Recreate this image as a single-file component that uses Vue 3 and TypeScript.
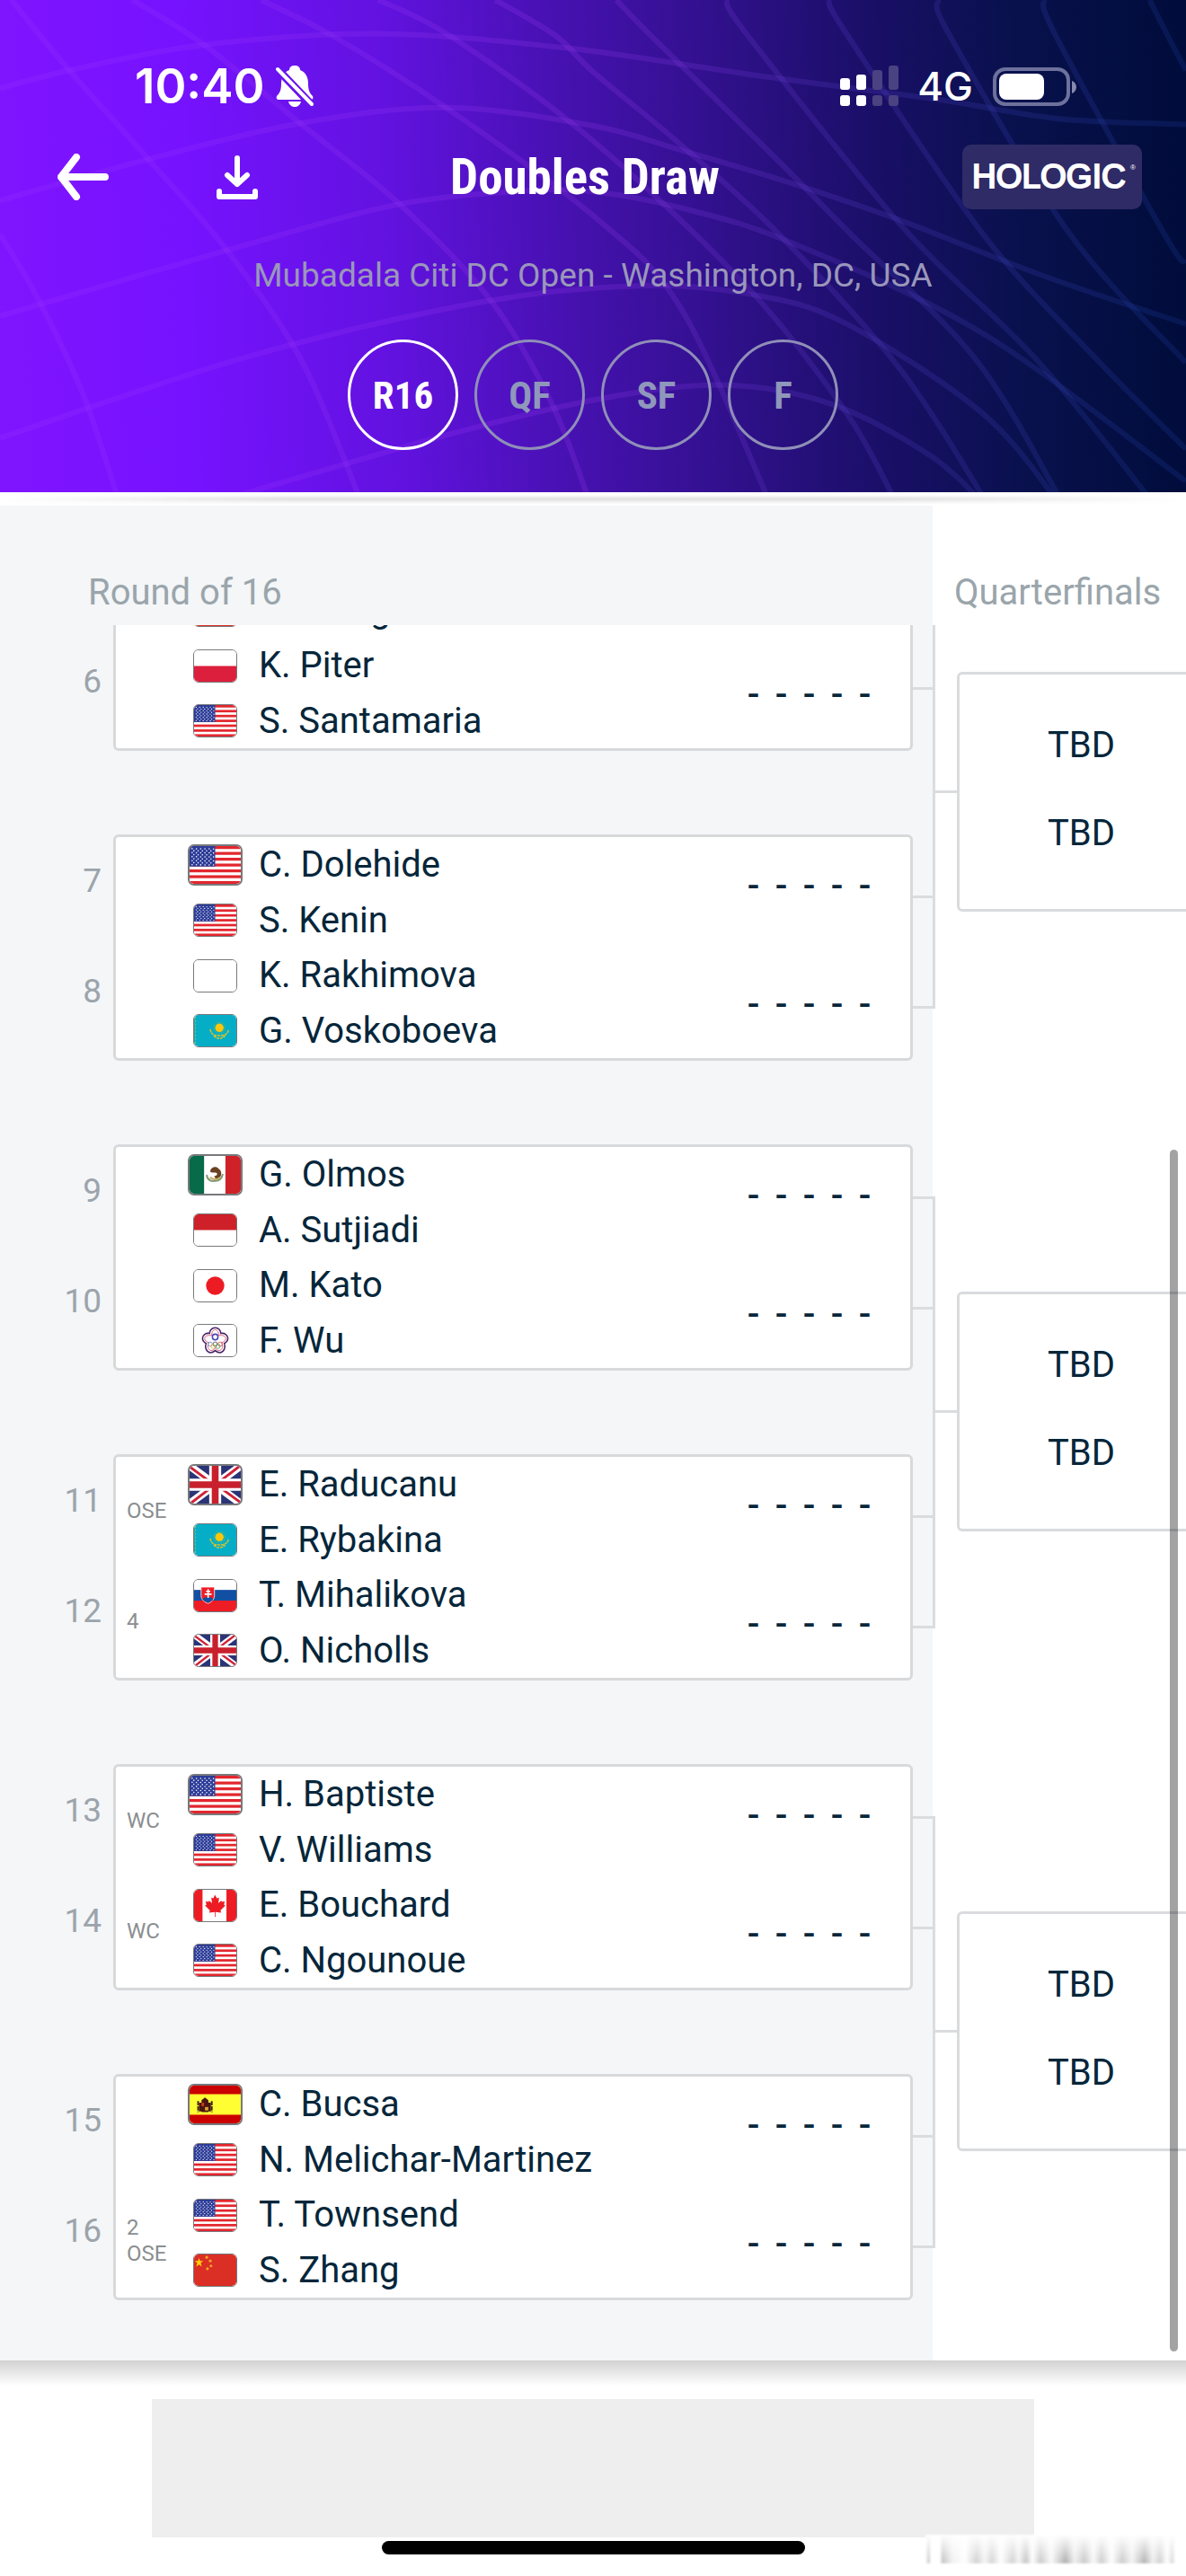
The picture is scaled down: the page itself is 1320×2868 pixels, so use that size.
<script setup lang="ts">
type Country = 'us' | 'pl' | 'cn' | 'kz' | 'none' | 'mx' | 'id' | 'jp' | 'tpe' | 'gb' | 'sk' | 'ca' | 'es'

interface Player {
  name: string
  country: Country
  lead?: boolean
}

interface Team {
  slot: number | null
  seed: string[]
  players: (Player | null)[]
}

type Match = Team[]
type Point = [number, number]

const rounds = ['R16', 'QF', 'SF', 'F']

const p = (name: string, country: Country, lead = false): Player => ({ name, country, lead })
const team = (slot: number | null, players: (Player | null)[], seed: string[] = []): Team => ({ slot, seed, players })

const pairs: Match[][] = [
  [
    [
      team(null, [null, p('X. Wang', 'cn')]),
      team(6, [p('K. Piter', 'pl'), p('S. Santamaria', 'us')]),
    ],
    [
      team(7, [p('C. Dolehide', 'us', true), p('S. Kenin', 'us')]),
      team(8, [p('K. Rakhimova', 'none'), p('G. Voskoboeva', 'kz')]),
    ],
  ],
  [
    [
      team(9, [p('G. Olmos', 'mx', true), p('A. Sutjiadi', 'id')]),
      team(10, [p('M. Kato', 'jp'), p('F. Wu', 'tpe')]),
    ],
    [
      team(11, [p('E. Raducanu', 'gb', true), p('E. Rybakina', 'kz')], ['OSE']),
      team(12, [p('T. Mihalikova', 'sk'), p('O. Nicholls', 'gb')], ['4']),
    ],
  ],
  [
    [
      team(13, [p('H. Baptiste', 'us', true), p('V. Williams', 'us')], ['WC']),
      team(14, [p('E. Bouchard', 'ca'), p('C. Ngounoue', 'us')], ['WC']),
    ],
    [
      team(15, [p('C. Bucsa', 'es', true), p('N. Melichar-Martinez', 'us')]),
      team(16, [p('T. Townsend', 'us'), p('S. Zhang', 'cn')], ['2', 'OSE']),
    ],
  ],
]

/* Court-net mesh behind the header: each curve is a smooth line through its points. */
const mesh: Point[][] = [
  [[0, 275], [100, 215], [270, 140], [500, 105], [750, 150], [1000, 235], [1240, 310], [1400, 370], [1568, 388]],
  [[0, 625], [190, 500], [395, 385], [590, 335], [784, 392], [899, 467], [1044, 569], [1184, 681], [1380, 860], [1568, 1010]],
  [[0, 985], [300, 780], [520, 640], [690, 595], [784, 597], [909, 653], [1050, 760], [1300, 1040], [1568, 1500]],
  [[0, 1365], [330, 1110], [640, 940], [850, 890], [1000, 920], [1120, 1010], [1300, 1290], [1400, 1568]],
  [[280, 1568], [600, 1350], [800, 1240], [960, 1200], [1100, 1260], [1230, 1420], [1300, 1568]],
  [[0, 730], [50, 930], [110, 1230], [158, 1568]],
  [[15, 0], [90, 215], [190, 480], [300, 780], [400, 1130], [478, 1568]],
  [[175, 0], [270, 140], [400, 390], [530, 640], [650, 940], [730, 1260], [780, 1568]],
  [[345, 0], [440, 112], [590, 336], [784, 672], [900, 960], [1018, 1568]],
  [[500, 0], [595, 112], [784, 439], [990, 900], [1120, 1290], [1185, 1568]],
  [[655, 0], [735, 112], [784, 224], [894, 439], [1029, 728], [1190, 1150], [1305, 1568]],
  [[815, 0], [861, 112], [1034, 513], [1124, 728], [1290, 1120], [1405, 1568]],
  [[960, 0], [989, 112], [1194, 709], [1370, 1120], [1525, 1568]],
  [[1095, 0], [1121, 112], [1299, 728], [1450, 1120], [1568, 1400]],
  [[1240, 0], [1256, 112], [1414, 728], [1568, 1130]],
  [[1380, 0], [1396, 112], [1539, 728], [1568, 820]],
  [[1520, 0], [1544, 112], [1568, 220]],
]

function smooth(points: Point[]): string {
  let d = `M${points[0][0]} ${points[0][1]}`
  for (let i = 0; i < points.length - 1; i++) {
    const a = points[Math.max(i - 1, 0)]
    const b = points[i]
    const c = points[i + 1]
    const e = points[Math.min(i + 2, points.length - 1)]
    d += ` C${b[0] + (c[0] - a[0]) / 6} ${b[1] + (c[1] - a[1]) / 6} ${c[0] - (e[0] - b[0]) / 6} ${c[1] - (e[1] - b[1]) / 6} ${c[0]} ${c[1]}`
  }
  return d
}

const meshPaths = mesh.map(smooth)

const stars: Point[] = []
for (let row = 0; row < 9; row++) {
  const count = row % 2 === 0 ? 6 : 5
  for (let i = 0; i < count; i++) {
    stars.push([(row % 2 === 0 ? 3 : 5) + i * 5, 3 + row * 2])
  }
}
</script>

<template>
  <main class="screen">
    <header class="hero">
      <svg class="mesh" viewBox="0 0 1568 1534" preserveAspectRatio="none" aria-hidden="true">
        <defs>
          <linearGradient id="mesh-tint" gradientUnits="userSpaceOnUse" x1="0" y1="0" x2="1568" y2="0">
            <stop offset="0" stop-color="#a03cff" stop-opacity="0.18" />
            <stop offset="0.5" stop-color="#a03cf0" stop-opacity="0.2" />
            <stop offset="0.75" stop-color="#5a46d2" stop-opacity="0.2" />
            <stop offset="1" stop-color="#1e46b4" stop-opacity="0.2" />
          </linearGradient>
        </defs>
        <path v-for="(d, i) in meshPaths" :key="i" :d="d" stroke="url(#mesh-tint)" />
      </svg>

      <div class="status">
        <span class="clock">10:40</span>
        <svg class="bell" viewBox="0 0 42 46" aria-hidden="true">
          <path d="M21 0c4 0 6 2 6 5 6 2 9 8 9 15 0 8 2 11 5 14 1 2 0 4-2 4H3c-2 0-3-2-2-4 3-3 5-6 5-14C6 13 9 7 15 5c0-3 2-5 6-5z" fill="#fff" />
          <path d="M14 40h14c-1 4-4 6-7 6s-6-2-7-6z" fill="#fff" />
          <path d="M-1 1l42 44" stroke="#6a12ef" stroke-width="9" />
          <path d="M2 4l38 39" stroke="#fff" stroke-width="4" stroke-linecap="round" />
        </svg>
        <svg class="signal" viewBox="0 0 65 46" aria-hidden="true">
          <g fill="#fff">
            <rect x="0" y="14" width="11" height="13" rx="3" />
            <rect x="18" y="10" width="11" height="17" rx="3" />
            <rect x="0" y="33" width="11" height="12" rx="3" />
            <rect x="18" y="33" width="11" height="12" rx="3" />
          </g>
          <g fill="#4b4282">
            <rect x="36" y="5" width="11" height="22" rx="3" />
            <rect x="54" y="0" width="11" height="27" rx="3" />
            <rect x="36" y="33" width="11" height="12" rx="3" />
            <rect x="54" y="33" width="11" height="12" rx="3" />
          </g>
        </svg>
        <span class="network">4G</span>
        <svg class="battery" viewBox="0 0 93 43" aria-hidden="true">
          <rect x="2" y="2" width="82" height="39" rx="12" fill="none" stroke="#6d719c" stroke-width="4" />
          <rect x="7" y="7" width="50" height="29" rx="8" fill="#fff" />
          <path d="M88 15c3 1 5 4 5 7s-2 6-5 7z" fill="#858aae" />
        </svg>
      </div>

      <nav class="bar">
        <div class="actions">
          <button class="icon-button" type="button" aria-label="Back">
            <svg class="back" viewBox="0 0 58 52" aria-hidden="true">
              <path d="M22 4L5 26l17 22M5 26h49" />
            </svg>
          </button>
          <button class="icon-button" type="button" aria-label="Download">
            <svg class="download" viewBox="0 0 46 50" aria-hidden="true">
              <path d="M23 4v29M12 23l11 10 11-10M3 41v6h40v-6" />
            </svg>
          </button>
        </div>
        <h1 class="title">Doubles Draw</h1>
        <div class="sponsor">HOLOGIC<span class="mark">®</span></div>
      </nav>

      <p class="event">Mubadala Citi DC Open - Washington, DC, USA</p>

      <div class="rounds">
        <button
          v-for="(round, i) in rounds"
          :key="round"
          type="button"
          class="round"
          :class="{ active: i === 0 }"
        >{{ round }}</button>
      </div>
    </header>

    <div class="rule"></div>

    <section class="draw">
      <div class="headings">
        <h2 class="heading first">Round of 16</h2>
        <h2 class="heading second">Quarterfinals</h2>
      </div>

      <div class="viewport">
        <div class="bracket">
          <div class="r16">
            <div v-for="(pair, pi) in pairs" :key="pi" class="pair">
              <div v-for="(match, mi) in pair" :key="mi" class="match">
                <div class="slots">
                  <span v-for="(t, ti) in match" :key="ti" class="slot">{{ t.slot }}</span>
                </div>
                <article class="card">
                  <div class="seeds">
                    <div v-for="(t, ti) in match" :key="ti" class="seed">
                      <span v-for="s in t.seed" :key="s">{{ s }}</span>
                    </div>
                  </div>
                  <div class="teams">
                    <ul v-for="(t, ti) in match" :key="ti" class="team">
                      <li v-for="(pl, i) in t.players" :key="i" class="player">
                        <template v-if="pl">
                          <span class="flag-cell">
                            <svg class="flag" :class="{ lead: pl.lead }" viewBox="0 0 60 44" preserveAspectRatio="none" aria-hidden="true">
                              <rect width="60" height="44" fill="#fff" />
                              <template v-if="pl.country === 'us'">
                                <rect v-for="n in 7" :key="n" :y="(n - 1) * 6.8" width="60" height="3.4" fill="#e3262e" />
                                <rect width="30" height="23.8" fill="#2c3c98" />
                                <circle v-for="(s, si) in stars" :key="'s' + si" :cx="s[0]" :cy="s[1] + si / 16" r="0.8" fill="#fff" />
                              </template>
                              <rect v-else-if="pl.country === 'pl'" y="22" width="60" height="22" fill="#dc1f3c" />
                              <rect v-else-if="pl.country === 'id'" width="60" height="22" fill="#ce2028" />
                              <circle v-else-if="pl.country === 'jp'" cx="30" cy="22" r="13" fill="#ed1c24" />
                              <template v-else-if="pl.country === 'kz'">
                                <rect width="60" height="44" fill="#05aec6" />
                                <path d="M2 2v40" stroke="#b9b83c" stroke-width="1" stroke-dasharray="3 2" />
                                <circle cx="36" cy="18" r="6" fill="#fdc60a" />
                                <circle cx="36" cy="18" r="8" fill="none" stroke="#c9bf2e" stroke-width="1" stroke-dasharray="1 2" />
                                <path d="M23 20c1 8 7 9 13 9s12-1 13-9M28 29c4 5 12 5 16 0" fill="none" stroke="#d6c32a" stroke-width="2" stroke-dasharray="4 1" />
                              </template>
                              <template v-else-if="pl.country === 'mx'">
                                <rect width="17" height="44" fill="#076a48" />
                                <rect x="42" width="18" height="44" fill="#ce2128" />
                                <path d="M24 18c1-5 7-7 10-3 4 2 4 8 1 11-3 2-6 0-6-3 2 1 4-1 3-3-2-2-5 1-8-2z" fill="#6b4022" />
                                <path d="M20 22c1 7 6 8 10 7 5 0 8-3 9-8" fill="none" stroke="#7d9877" stroke-width="2" />
                                <path d="M24 25c4 3 8 3 12 0" fill="none" stroke="#c4a75a" stroke-width="2" />
                              </template>
                              <template v-else-if="pl.country === 'tpe'">
                                <path d="M30 4c5 0 8 4 8 8 5-1 10 2 10 7 0 4-3 6-5 7 2 5 0 12-6 13-3 0-5-1-7-3-2 2-4 3-7 3-6-1-8-8-6-13-2-1-5-3-5-7 0-5 5-8 10-7 0-4 3-8 8-8z" fill="#fff" stroke="#47256b" stroke-width="2" />
                                <path d="M30 7c3 0 5 3 5 8 6-1 10 1 10 4 0 3-3 5-6 6 3 5 1 10-3 11-3 0-5-2-6-4-1 2-3 4-6 4-4-1-6-6-3-11-3-1-6-3-6-6 0-3 4-5 10-4 0-5 2-8 5-8z" fill="none" stroke="#d93c5b" stroke-width="1" />
                                <circle cx="30" cy="17" r="4" fill="#fff" stroke="#4a46b8" stroke-width="2" />
                                <g fill="none" stroke-width="1">
                                  <circle cx="23" cy="27" r="3" stroke="#5a84c8" />
                                  <circle cx="30" cy="27" r="3" stroke="#444" />
                                  <circle cx="37" cy="27" r="3" stroke="#d44" />
                                  <circle cx="27" cy="30" r="3" stroke="#d9b13a" />
                                  <circle cx="34" cy="30" r="3" stroke="#3f9a57" />
                                </g>
                              </template>
                              <template v-else-if="pl.country === 'gb'">
                                <rect width="60" height="44" fill="#2b3477" />
                                <path d="M0 0l60 44M60 0L0 44" stroke="#fff" stroke-width="9" />
                                <path d="M0 1l26 19M60 43L34 24M59 0L33 20M1 44l26-20" stroke="#cf2136" stroke-width="3" />
                                <path d="M30 0v44M0 22h60" stroke="#fff" stroke-width="14" />
                                <path d="M30 0v44M0 22h60" stroke="#c8202c" stroke-width="8" />
                              </template>
                              <template v-else-if="pl.country === 'sk'">
                                <rect y="14" width="60" height="16" fill="#114fa3" />
                                <rect y="29" width="60" height="15" fill="#ee1c25" />
                                <path d="M10 10h19v12c0 6-5 9-9 11-5-2-10-5-10-11z" fill="#ee1c25" stroke="#fff" stroke-width="1" />
                                <path d="M12 27c3-3 5-2 8-3 3 1 5 0 7 3-1 2-4 4-7 5-4-1-6-3-8-5z" fill="#114fa3" />
                                <path d="M20 13v12M17 16h6M15 20h10" stroke="#fff" stroke-width="2" />
                              </template>
                              <template v-else-if="pl.country === 'ca'">
                                <rect width="12" height="44" fill="#ed1c24" />
                                <rect x="46" width="14" height="44" fill="#ed1c24" />
                                <path d="M29.500 7l3 5 3-1-1 8 4-4 1 2 4-1-1 5 2 1-7 7 1 3-8-1v7h-1v-7l-8 1 1-3-7-7 2-1-1-5 4 1 1-2 4 4-1-8 3 1z" fill="#ed1c24" />
                              </template>
                              <template v-else-if="pl.country === 'es'">
                                <rect width="60" height="44" fill="#fefe33" />
                                <rect width="60" height="10" fill="#cb0101" />
                                <rect y="34" width="60" height="10" fill="#cb0101" />
                                <path d="M14 17l4-3 4 3v3h3v10h-3v1h-8v-1h-3V20h3z" fill="#4a1512" />
                                <path d="M10 18v13M26 18v13" stroke="#3a2418" stroke-width="2" stroke-dasharray="5 1" />
                                <rect x="14" y="20" width="3" height="4" fill="#d43a1a" />
                                <rect x="18" y="25" width="4" height="4" fill="#d9a52a" />
                              </template>
                              <template v-else-if="pl.country === 'cn'">
                                <rect width="60" height="44" fill="#db2e25" />
                                <path d="M7 5l1.500 4h4.500l-3.500 3 1.500 5-4-3-4 3 1.500-5-3.500-3h4.500z" fill="#fdd10a" />
                                <g fill="#f5a623">
                                  <circle cx="18" cy="4" r="2" />
                                  <circle cx="23" cy="9" r="2" />
                                  <circle cx="24" cy="16" r="2" />
                                  <circle cx="19" cy="20" r="2" />
                                </g>
                              </template>
                            </svg>
                          </span>
                          <span class="name">{{ pl.name }}</span>
                        </template>
                      </li>
                    </ul>
                  </div>
                  <div class="scores">
                    <div v-for="(t, ti) in match" :key="ti" class="score">
                      <template v-if="t.slot">
                        <span v-for="n in 5" :key="n">-</span>
                      </template>
                    </div>
                  </div>
                </article>
                <div class="stubs" :class="{ lower: mi === 1 }">
                  <i></i>
                  <i></i>
                </div>
              </div>
            </div>
          </div>

          <div class="qf">
            <div v-for="(pair, pi) in pairs" :key="pi" class="next">
              <i class="join"></i>
              <i class="link"></i>
              <article class="tbd-card">
                <span v-for="n in 2" :key="n" class="tbd">TBD</span>
              </article>
            </div>
          </div>
        </div>
        <div class="scrollbar"></div>
      </div>
    </section>

    <footer class="foot">
      <div class="shade"></div>
      <div class="ad"></div>
      <div class="home"></div>
      <div class="stamp"></div>
    </footer>
  </main>
</template>

<style>
body {
  margin: 0;
  background: #fff;
}
</style>

<style scoped>
.screen {
  position: relative;
  min-height: 100vh;
  overflow: hidden;
  background: #fff;
  color: #06263a;
  font-family: Roboto, "Liberation Sans", sans-serif;
  font-size: 40px;
  line-height: 48px;
}

h1,
h2,
p,
ul {
  margin: 0;
  padding: 0;
  list-style: none;
}

button {
  margin: 0;
  padding: 0;
  border: 0;
  background: none;
  color: inherit;
  font: inherit;
}

svg {
  display: block;
  flex: none;
}

/* header */
.hero {
  position: relative;
  padding: 67px 0 47px;
  background: linear-gradient(88deg, #8014ff 0%, #7612ff 16%, #6212e0 33%, #4611b0 48%, #2e1088 62%, #190f66 74%, #08114c 86%, #000c3a 100%);
  color: #fff;
}

.mesh {
  position: absolute;
  inset: 0;
  width: 100%;
  height: 100%;
}

.mesh path {
  fill: none;
  stroke-width: 6px;
  vector-effect: non-scaling-stroke;
}

.status {
  position: relative;
  display: flex;
  align-items: center;
  height: 58px;
  padding: 0 122px 0 150px;
  font-family: Inter, Roboto, sans-serif;
}

.clock {
  font-size: 53px;
  font-weight: 600;
}

.bell {
  width: 42px;
  height: 46px;
  margin: 0 auto 0 12px;
}

.signal {
  width: 65px;
  height: 46px;
}

.network {
  margin: 0 22px 0 21px;
  font-size: 44px;
  font-weight: 500;
}

.battery {
  width: 93px;
  height: 43px;
}

.bar {
  position: relative;
  display: grid;
  grid-template-columns: 1fr auto 1fr;
  align-items: center;
  margin-top: 36px;
  padding: 0 49px 0 31px;
}

.actions {
  display: flex;
  align-items: center;
  gap: 120px;
  padding-left: 32px;
}

.icon-button path {
  fill: none;
  stroke: #fff;
  stroke-linecap: round;
  stroke-linejoin: round;
}

.back {
  width: 58px;
  height: 52px;
  stroke-width: 8px;
}

.download {
  width: 46px;
  height: 50px;
  stroke-width: 6px;
}

.title {
  font-family: "Roboto Condensed", "Liberation Sans Narrow", Roboto, sans-serif;
  font-size: 55px;
  font-weight: 700;
  line-height: 70px;
}

.sponsor {
  position: relative;
  justify-self: end;
  box-sizing: border-box;
  width: 200px;
  height: 72px;
  padding-left: 11px;
  border-radius: 10px;
  background: #2f2b66;
  font-family: "Liberation Sans", sans-serif;
  font-size: 37px;
  line-height: 72px;
  -webkit-text-stroke: 2px #fff;
}

.mark {
  position: absolute;
  top: 20px;
  right: 7px;
  font-size: 8px;
  line-height: 12px;
  -webkit-text-stroke: 0;
}

.event {
  position: relative;
  margin-top: 50px;
  color: #9a97ba;
  font-size: 37px;
  text-align: center;
}

.rounds {
  position: relative;
  display: flex;
  justify-content: center;
  gap: 18px;
  margin-top: 47px;
}

.round {
  box-sizing: border-box;
  width: 123px;
  height: 123px;
  border: 3px solid #8f8fb8;
  border-radius: 50%;
  color: #8f97bb;
  font-family: "Roboto Condensed", "Liberation Sans Narrow", Roboto, sans-serif;
  font-size: 43px;
  font-weight: 700;
}

.round.active {
  border-color: #fff;
  color: #fff;
}

.rule {
  height: 15px;
  background:
    linear-gradient(90deg, #fff, transparent 25%, transparent 75%, #fff),
    linear-gradient(#fff, #fff 20%, #e0e0e0 50%, #fff 90%);
}

/* draw */
.headings {
  display: flex;
}

.heading {
  padding: 73px 0 12px;
  color: #9aa5ab;
  font-size: 40px;
  font-weight: 400;
}

.first {
  flex: 1;
  padding-left: 98px;
  background: #f4f6f8;
}

.second {
  width: 258px;
  padding-left: 24px;
}

.viewport {
  position: relative;
  overflow: hidden;
}

.bracket {
  display: flex;
  margin-top: -112px;
}

.r16 {
  display: flex;
  flex: 1;
  flex-direction: column;
  gap: 93px;
  padding-bottom: 67px;
  background: #f4f6f8;
}

.pair {
  display: flex;
  flex-direction: column;
  gap: 93px;
}

.match {
  display: flex;
}

.slots {
  display: flex;
  flex: none;
  flex-direction: column;
  gap: 77px;
  box-sizing: border-box;
  width: 126px;
  padding: 29px 13px 0 0;
  color: #9ca4ab;
  font-size: 37px;
  line-height: 46px;
  text-align: right;
}

.slot {
  height: 46px;
}

.card {
  display: flex;
  flex: 1;
  box-sizing: border-box;
  height: 252px;
  border: 3px solid #d7d9db;
  border-radius: 6px;
  background: #fff;
}

.seeds {
  display: flex;
  flex-direction: column;
  gap: 65px;
  box-sizing: border-box;
  width: 80px;
  padding: 31px 0 0 12px;
  color: #8b8e90;
  font-size: 24px;
  line-height: 29px;
}

.seed {
  display: flex;
  flex-direction: column;
  justify-content: center;
  height: 58px;
}

.teams {
  flex: 1;
}

.player {
  display: flex;
  align-items: center;
  height: 62px;
}

.player:last-child {
  height: 61px;
}

.flag-cell {
  display: flex;
  justify-content: center;
  width: 61px;
  margin-right: 18px;
}

.flag {
  box-sizing: border-box;
  width: 49px;
  height: 37px;
  border: 1px solid #77797c;
  border-radius: 6px;
}

.flag.lead {
  width: 61px;
  height: 46px;
  border-width: 2px;
  border-radius: 7px;
}

.scores {
  display: flex;
  flex-direction: column;
  gap: 92px;
  padding: 35px 35px 0 0;
  font-weight: 500;
  line-height: 40px;
}

.score {
  display: flex;
  height: 40px;
  text-align: center;
}

.score span {
  width: 31px;
}

.stubs {
  display: flex;
  flex: none;
  flex-direction: column;
  gap: 120px;
  width: 22px;
  padding-top: 58px;
}

.stubs.lower {
  padding-top: 68px;
}

.stubs i {
  height: 3px;
  background: #dadcde;
}

.qf {
  display: flex;
  flex-direction: column;
  gap: 93px;
  width: 282px;
}

.next {
  display: flex;
  align-items: flex-start;
  height: 597px;
}

.join {
  width: 3px;
  height: 481px;
  margin-top: 58px;
  background: #dadcde;
}

.link {
  width: 24px;
  height: 3px;
  margin-top: 296px;
  background: #dadcde;
}

.tbd-card {
  display: flex;
  flex: 1;
  flex-direction: column;
  align-items: center;
  gap: 50px;
  box-sizing: border-box;
  height: 267px;
  margin: 164px -22px 0 0;
  padding-top: 55px;
  border: 3px solid #d9dbdd;
  border-radius: 6px;
}

.scrollbar {
  position: absolute;
  top: 584px;
  right: 9px;
  bottom: 10px;
  width: 9px;
  border-radius: 5px;
  background: rgba(0, 0, 0, 0.36);
}

/* footer */
.foot {
  position: relative;
  padding-bottom: 24px;
}

.shade {
  height: 28px;
  background: linear-gradient(#d2d2d2, #e6e6e6 45%, #fff);
}

.ad {
  height: 154px;
  margin: 15px 169px 4px;
  background: #eee;
}

.home {
  width: 471px;
  height: 15px;
  margin: 0 auto;
  border-radius: 8px;
  background: #000;
}

.stamp {
  position: absolute;
  right: 12px;
  bottom: 14px;
  width: 278px;
  height: 32px;
  background:
    linear-gradient(#fff, transparent 90%),
    linear-gradient(90deg, #fff 0, #ccc 4px, #fff 6px, #fff 16px, #c8c8c8 19px, #f2f2f2 30px, #fff 44px, #d4d4d4 57px, #f6f6f6 66px, #d8d8d8 74px, #fff 84px, #d6d6d6 97px, #f4f4f4 104px, #c8c8c8 112px, #fff 119px, #cecece 128px, #fafafa 140px, #b4b4b4 156px, #f0f0f0 166px, #cdcdcd 177px, #fafafa 187px, #d0d0d0 196px, #fff 207px, #cfcfcf 219px, #f4f4f4 230px, #b8b8b8 244px, #f0f0f0 253px, #d4d4d4 261px, #fff 269px, #ddd 275px, #fff 278px);
  filter: blur(1px);
}
</style>
